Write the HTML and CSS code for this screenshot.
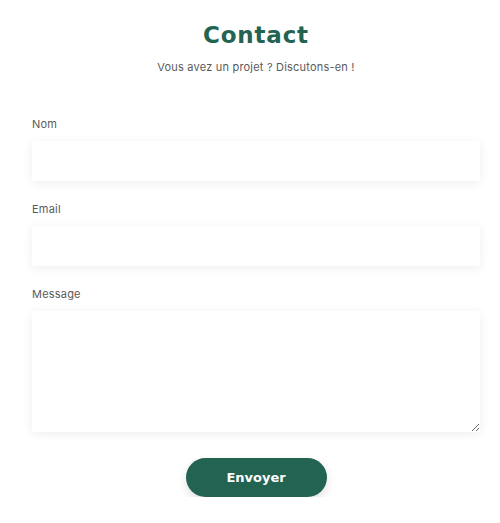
FILE: index.html
```html
<!DOCTYPE html>
<html lang="fr">
<head>
<meta charset="utf-8">
<link rel="stylesheet" href="styles.css">
</head>
<body>
<main class="contact">
  <h1 class="title">Contact</h1>
  <p class="subtitle">Vous avez un projet ? Discutons-en !</p>
  <form class="form">
    <label class="field">
      <span class="label">Nom</span>
      <input class="input" type="text">
    </label>
    <label class="field">
      <span class="label">Email</span>
      <input class="input" type="email">
    </label>
    <label class="field">
      <span class="label">Message</span>
      <textarea class="input textarea"></textarea>
    </label>
    <div class="actions">
      <button class="button" type="button">Envoyer</button>
    </div>
  </form>
</main>
</body>
</html>
```
FILE: styles.css
```css
* { box-sizing: border-box; }
html, body { margin: 0; background: #fff; }
body { font-family: "Inter", "Open Sans", sans-serif; color: #555; }
.contact {
  padding: 22px 20px 0 32px;
  display: flex;
  flex-direction: column;
}
.title {
  margin: 0;
  text-align: center;
  font-family: "DejaVu Sans", sans-serif;
  font-weight: 700;
  font-size: 23px;
  line-height: 26px;
  letter-spacing: 0.8px;
  color: #236352;
}
.subtitle {
  margin: 12px 0 0;
  text-align: center;
  font-size: 11px;
  line-height: 14px;
  letter-spacing: 0.2px;
  color: #5a5a5a;
}
.form {
  margin-top: 43px;
  display: flex;
  flex-direction: column;
}
.field {
  display: flex;
  flex-direction: column;
  margin-bottom: 21px;
}
.label {
  font-size: 11px;
  line-height: 14px;
  letter-spacing: 0.2px;
  color: #5a5a5a;
  margin-bottom: 10px;
}
.input {
  display: block;
  width: 100%;
  height: 40px;
  border: none;
  outline: none;
  background: #fff;
  box-shadow: 0 2px 10px rgba(0, 0, 0, 0.07);
  font: inherit;
  padding: 8px 12px;
}
.textarea {
  height: 121px;
  resize: vertical;
}
.actions {
  display: flex;
  justify-content: center;
  margin-top: 5px;
}
.button {
  width: 141px;
  height: 39px;
  border: none;
  border-radius: 20px;
  background: #236352;
  color: #fff;
  font-family: "DejaVu Sans", sans-serif;
  font-weight: 700;
  font-size: 13px;
  box-shadow: 0 4px 10px rgba(0, 0, 0, 0.12);
  cursor: pointer;
}
```
